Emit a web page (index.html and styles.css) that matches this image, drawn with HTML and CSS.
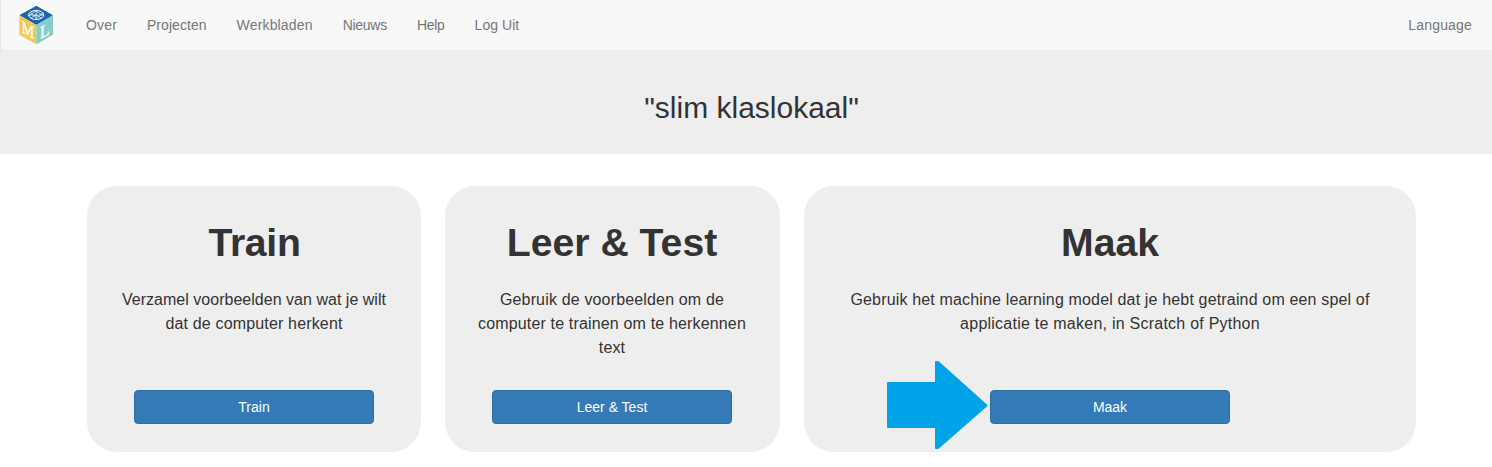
FILE: index.html
```html
<!DOCTYPE html>
<html lang="nl">
<head>
<meta charset="utf-8">
<title>slim klaslokaal</title>
<link rel="stylesheet" href="styles.css">
</head>
<body>
<nav class="navbar">
  <a class="brand">
    <svg width="36" height="40" viewBox="18 5 36 40">
      <path d="M36.4 5.7 53 15.2 36.4 25 19.3 15.2z" fill="#1a65ae"/>
      <path d="M19.3 15.2 36.4 25V44.2L19.3 34.7z" fill="#f3c850"/>
      <path d="M53 15.2 36.4 25V44.2L53 34.7z" fill="#84cdca"/>
      <g fill="none" stroke="#fff" stroke-width="1">
        <ellipse cx="36.2" cy="15" rx="7.6" ry="4.5"/>
        <path d="M29 15.5 36 11l7 4.500M30.500 12.500 37 18.500l6-6M36.200 10.500v9M31 18l5-3 5.500 3M29 15h14.500" stroke-width=".7"/>
      </g>
      <text class="face" transform="matrix(.8 .44 0 1 27.800 35.800)">M</text>
      <text class="face" transform="matrix(.85 -.42 0 1 44.600 36.600)">L</text>
    </svg>
  </a>
  <ul class="links">
    <li class="wide">Over</li><li>Projecten</li><li class="wide">Werkbladen</li><li class="tight">Nieuws</li><li class="tight">Help</li><li>Log Uit</li>
  </ul>
  <span class="language">Language</span>
</nav>
<header class="banner"><h2>"slim klaslokaal"</h2></header>
<main class="cards">
  <section class="card card-train">
    <h1>Train</h1>
    <p><span class="lead">Verzamel voorbeelden van wat je wilt</span> dat de computer herkent</p>
    <a class="button">Train</a>
  </section>
  <section class="card card-learn">
    <h1>Leer &amp; Test</h1>
    <p>Gebruik de voorbeelden om de computer te trainen om te herkennen text</p>
    <a class="button">Leer &amp; Test</a>
  </section>
  <section class="card">
    <h1>Maak</h1>
    <p>Gebruik het machine learning model dat je hebt getraind om een spel of <span class="platforms">applicatie te maken, in Scratch of Python</span></p>
    <a class="button">Maak
      <svg class="arrow" width="101" height="89" viewBox="0 0 101 89"><path d="M1 22H49V1H51L99.500 44.500 51 87H49V66H1z" fill="#00a2e8" stroke="#00a2e8" stroke-width="2" stroke-linejoin="round"/></svg>
    </a>
  </section>
</main>
</body>
</html>
```
FILE: styles.css
```css
* { box-sizing: border-box; }
body {
  margin: 0;
  height: 467px;
  overflow: hidden;
  background: #fff;
  color: #333;
  font: 14px/20px "Liberation Sans", Arial, sans-serif;
}
.navbar {
  display: flex;
  align-items: center;
  height: 51px;
  padding: 0 20px 0 17px;
  background: #f8f8f8;
  border-bottom: 1px solid #e7e7e7;
  border-left: 1px solid #e7e7e7;
  color: #777;
}
.brand { display: flex; }
.face { font: 18px "Liberation Serif", serif; fill: #fff; stroke: #fff; stroke-width: .4px; text-anchor: middle; }
.links { display: flex; gap: 30px; margin: 0; padding: 0 0 0 32px; list-style: none; }
.links li { letter-spacing: .05px; }
.links .wide { letter-spacing: .16px; }
.links .tight { letter-spacing: -.28px; }
.language { margin-left: auto; letter-spacing: .18px; }
.banner {
  height: 103px;
  padding: 40px 0 0 11px;
  background: #eee;
  text-align: center;
}
.banner h2 { margin: 0; font-size: 30px; line-height: 33px; font-weight: 500; }
.cards {
  display: grid;
  grid-template-columns: 334px 335px 612px;
  gap: 24px;
  padding: 32px 0 0 87px;
}
.card {
  display: flex;
  flex-direction: column;
  align-items: center;
  height: 266px;
  padding: 34px 32px 28px;
  border-radius: 30px;
  background: #eee;
  text-align: center;
}
.card-learn { padding-right: 33px; }
.card h1 { margin: 0; font-size: 39.2px; line-height: 45px; font-weight: 700; }
.card-train h1 { padding-left: 1px; letter-spacing: -.3px; }
.card p { margin: 23px 0 0; font-size: 16px; line-height: 24px; letter-spacing: .16px; }
.card .lead { letter-spacing: .02px; }
.card .platforms { letter-spacing: .24px; }
.button {
  position: relative;
  width: 240px;
  height: 34px;
  margin-top: auto;
  padding: 6px 12px;
  border: 1px solid #2e6da4;
  border-radius: 4px;
  background: #337ab7;
  color: #fff;
}
.arrow { position: absolute; left: -104px; top: -30px; }
```
